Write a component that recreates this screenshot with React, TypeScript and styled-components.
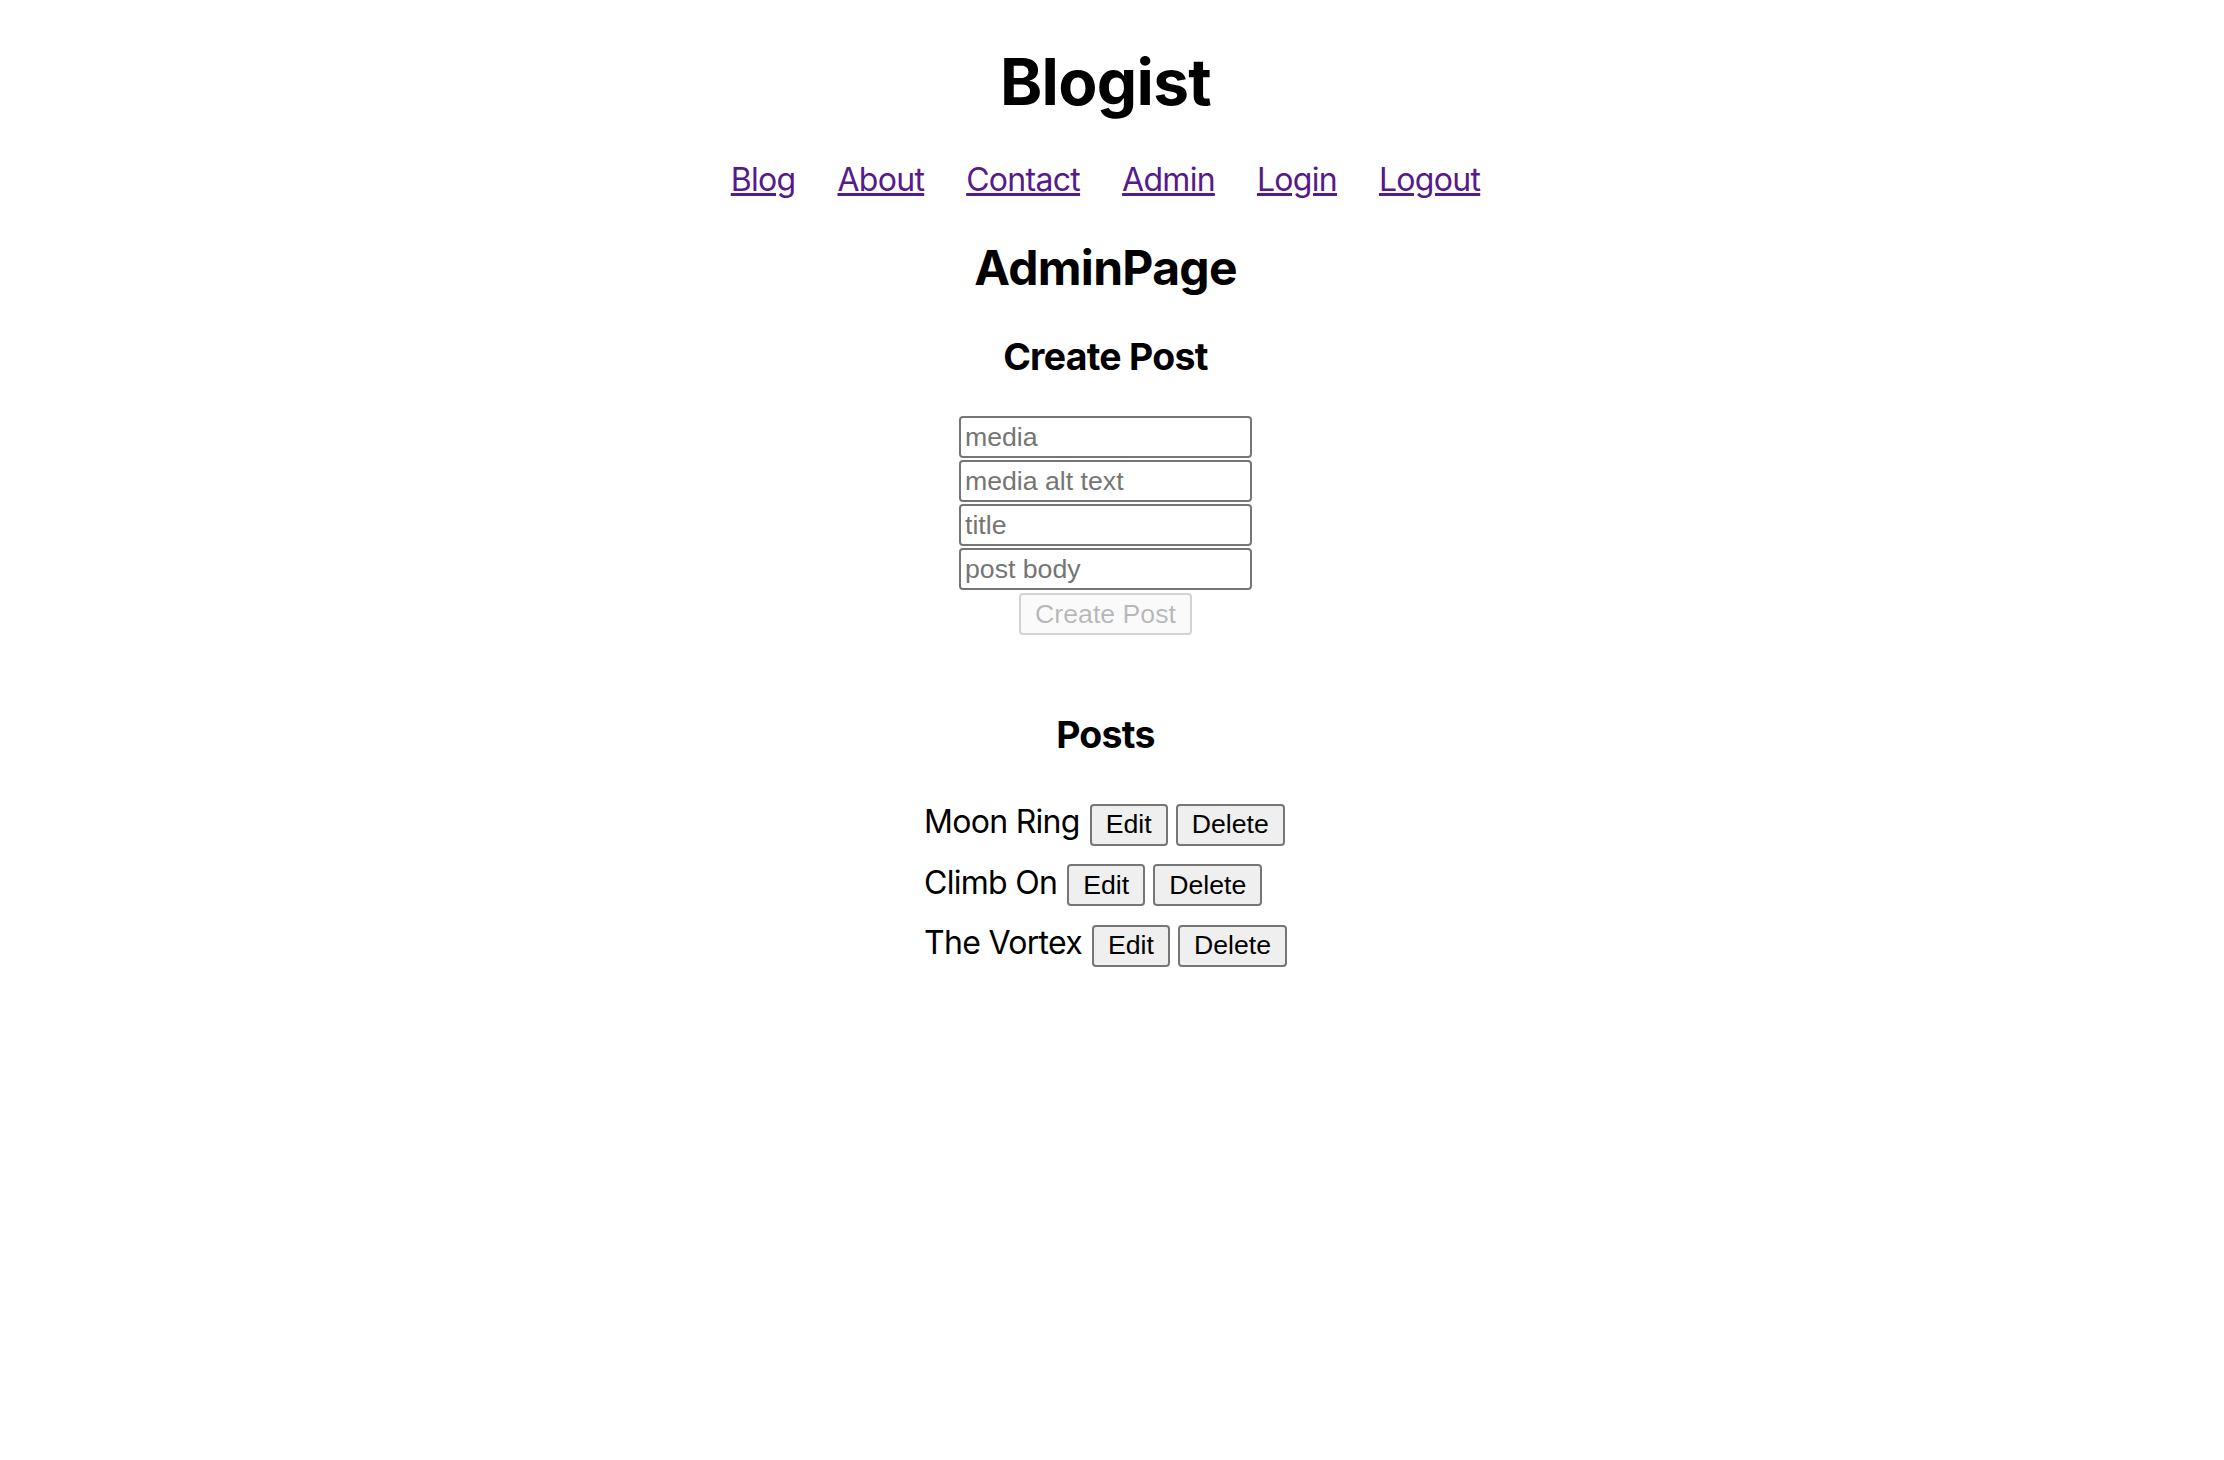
import React from 'react'
import styled, { createGlobalStyle } from 'styled-components'

const GlobalStyle = createGlobalStyle`
  html, body {
    margin: 0;
    padding: 0;
    background: #ffffff;
  }
  body {
    font-family: Inter, 'Noto Sans', sans-serif;
    font-size: 32px;
    letter-spacing: -0.022em;
    color: #000000;
  }
`

const Page = styled.div`
  display: flex;
  flex-direction: column;
  align-items: center;
  padding: 43px 13px 0 0;
`

const SiteTitle = styled.h1`
  margin: 0;
  font-size: 64px;
  font-weight: 700;
  line-height: normal;
`

const Nav = styled.nav`
  display: flex;
  gap: 42px;
  margin-top: 40px;
`

const NavLink = styled.a`
  font-size: 32px;
  line-height: normal;
  color: #551a8b;
  text-decoration: underline;
  cursor: pointer;
`

const PageTitle = styled.h2`
  margin: 39px 0 0;
  font-size: 48px;
  font-weight: 700;
  line-height: normal;
`

const SectionTitle = styled.h3<{ top: number }>`
  margin: ${({ top }) => top}px 0 0;
  font-size: 37.44px;
  font-weight: 700;
  line-height: normal;
`

const Form = styled.form`
  display: flex;
  flex-direction: column;
  align-items: center;
  gap: 2px;
  margin-top: 37px;
`

const Field = styled.input`
  box-sizing: border-box;
  width: 293px;
  height: 42px;
  padding: 2px 4px;
  border: 2px solid #767676;
  border-radius: 4px;
  font-family: 'Liberation Sans', Arial, sans-serif;
  font-size: 26.67px;
  letter-spacing: 0;
  color: #000000;
  background: #ffffff;

  ::placeholder {
    color: #757575;
  }
`

const Button = styled.button`
  box-sizing: border-box;
  height: 42px;
  padding: 2px 14px;
  border: 2px solid #767676;
  border-radius: 4px;
  background: #efefef;
  color: #000000;
  font-family: 'Liberation Sans', Arial, sans-serif;
  font-size: 26.67px;
  letter-spacing: 0;
  line-height: normal;

  &:disabled {
    color: rgba(16, 16, 16, 0.3);
    border-color: rgba(118, 118, 118, 0.3);
    background: rgba(239, 239, 239, 0.3);
  }
`

const SubmitButton = styled(Button)`
  margin-top: 1px;
`

const PostList = styled.div`
  display: flex;
  flex-direction: column;
  gap: 17px;
  margin-top: 45px;
`

const PostRow = styled.div`
  display: flex;
  align-items: baseline;
  gap: 10px;
`

const PostTitle = styled.span`
  font-size: 32px;
  line-height: normal;
`

const Actions = styled.div`
  display: flex;
  align-items: baseline;
  gap: 8px;
`

const LINKS = ['Blog', 'About', 'Contact', 'Admin', 'Login', 'Logout']
const FIELDS = ['media', 'media alt text', 'title', 'post body']
const POSTS = ['Moon Ring', 'Climb On', 'The Vortex']

export default function App() {
  return (
    <>
      <GlobalStyle />
      <Page>
        <SiteTitle>Blogist</SiteTitle>
        <Nav>
          {LINKS.map((label) => (
            <NavLink key={label}>{label}</NavLink>
          ))}
        </Nav>
        <PageTitle>AdminPage</PageTitle>
        <SectionTitle top={37}>Create Post</SectionTitle>
        <Form onSubmit={(e) => e.preventDefault()}>
          {FIELDS.map((ph) => (
            <Field key={ph} placeholder={ph} />
          ))}
          <SubmitButton type="submit" disabled>
            Create Post
          </SubmitButton>
        </Form>
        <SectionTitle top={77}>Posts</SectionTitle>
        <PostList>
          {POSTS.map((title) => (
            <PostRow key={title}>
              <PostTitle>{title}</PostTitle>
              <Actions>
                <Button type="button">Edit</Button>
                <Button type="button">Delete</Button>
              </Actions>
            </PostRow>
          ))}
        </PostList>
      </Page>
    </>
  )
}
